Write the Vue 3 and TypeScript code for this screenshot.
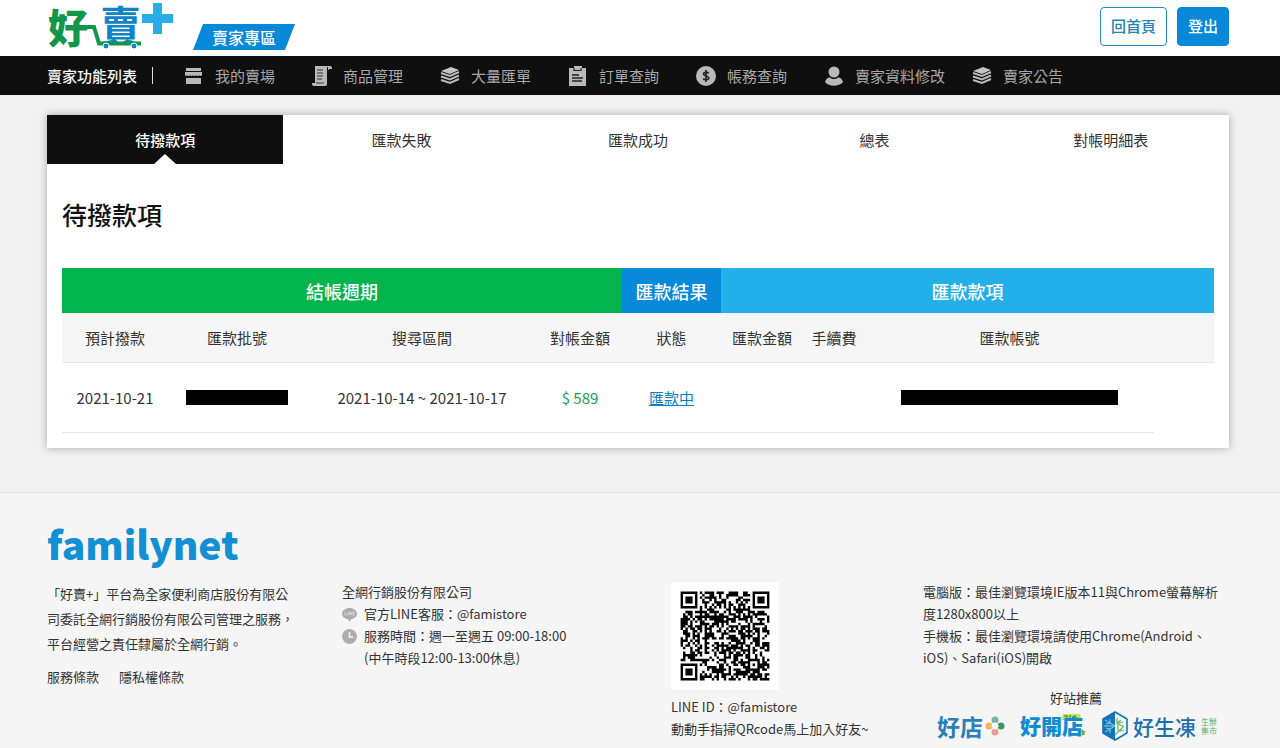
<script setup lang="ts">
import { ref } from 'vue'

interface NavItem {
  icon: string
  label: string
}

const navItems: NavItem[] = [
  { icon: 'shop', label: '我的賣場' },
  { icon: 'scroll', label: '商品管理' },
  { icon: 'stack', label: '大量匯單' },
  { icon: 'clipboard', label: '訂單查詢' },
  { icon: 'dollar', label: '帳務查詢' },
  { icon: 'user', label: '賣家資料修改' },
  { icon: 'stack', label: '賣家公告' },
]

const tabs: string[] = ['待撥款項', '匯款失敗', '匯款成功', '總表', '對帳明細表']
const activeTab = ref<string>(tabs[0])

const columns: string[] = ['預計撥款', '匯款批號', '搜尋區間', '對帳金額', '狀態', '匯款金額', '手續費', '匯款帳號', '']

// QR symbol: 37 modules per side with finder, timing and alignment patterns.
const QR_SIZE = 37

function ring(x: number, y: number, cx: number, cy: number): number {
  return Math.max(Math.abs(x - cx), Math.abs(y - cy))
}

function buildQrPath(): string {
  let seed = 20211021
  const next = (): number => {
    seed = (seed * 1103515245 + 12345) % 2147483648
    return seed / 2147483648
  }
  const finders: [number, number][] = [[3, 3], [QR_SIZE - 4, 3], [3, QR_SIZE - 4]]
  let path = ''
  for (let y = 0; y < QR_SIZE; y++) {
    for (let x = 0; x < QR_SIZE; x++) {
      let dark = next() < 0.54
      if (y === 6 || x === 6) dark = (x + y) % 2 === 0
      const align = ring(x, y, 30, 30)
      if (align <= 2) dark = align !== 1
      for (const [cx, cy] of finders) {
        const d = ring(x, y, cx, cy)
        if (d <= 4) dark = d === 3 || d <= 1
      }
      if (dark) path += `M${x} ${y}h1v1h-1z`
    }
  }
  return path
}

const qrPath = buildQrPath()
</script>

<template>
  <div class="page">
    <header class="header">
      <a class="brand" href="#" aria-label="好賣+">
        <svg width="128" height="56" viewBox="0 0 128 56">
          <text x="1" y="43" class="brand-hao">好</text>
          <text x="53" y="41" class="brand-mai">賣</text>
          <path d="M36 27H47L52 43.500H94" fill="none" stroke="#12964a" stroke-width="4" />
          <circle cx="59" cy="46" r="3" fill="#1184c6" stroke="#fff" />
          <circle cx="87" cy="46" r="3" fill="#1184c6" stroke="#fff" />
          <path d="M106 3h9v11h11v9h-11v11h-9V23H95v-9h11z" fill="#27aee6" />
        </svg>
      </a>
      <span class="zone">賣家專區</span>
      <div class="actions">
        <button type="button" class="btn">回首頁</button>
        <button type="button" class="btn btn-fill">登出</button>
      </div>
    </header>

    <nav class="nav">
      <span class="nav-title">賣家功能列表</span>
      <a v-for="item in navItems" :key="item.label" class="nav-item" href="#">
        <svg width="20" height="22" viewBox="0 0 20 22" aria-hidden="true">
          <g v-if="item.icon === 'shop'" fill="#b9b9b9">
            <path d="M2 3h15v3H2zM1 7h17v2.500a1.500 1.500 0 0 1-3 0 1.500 1.500 0 0 1-3 0 1.500 1.500 0 0 1-3 0 1.500 1.500 0 0 1-3 0 1.500 1.500 0 0 1-3 0 1 1.500 0 0 1-2 0z" />
            <path d="M2 13h15v6H2z" />
          </g>
          <g v-else-if="item.icon === 'scroll'">
            <path d="M3 1h14v4h-2v14a2 2 0 0 1-2 2H2a2 2 0 0 1-2-2v-1h3z" fill="#b9b9b9" />
            <path d="M15 1h3a2 2 0 0 1 2 2v1h-3z" fill="#b9b9b9" />
            <path d="M5 5h6M5 8h6M5 11h6M5 14h5M4 18h8" stroke="#333" stroke-width="1" />
            <path d="M15.500 2v3" stroke="#111" />
          </g>
          <g v-else-if="item.icon === 'stack'">
            <path d="M1 6l10-4 8 3-9 4z" fill="#c4c4c4" />
            <path d="M1 8l9 3 9-4M1 11.500l9 3 9-4M1 15l9 3 9-4" fill="none" stroke="#b9b9b9" stroke-width="2" />
          </g>
          <g v-else-if="item.icon === 'clipboard'">
            <path d="M1 3h5V1h8v2h4v18H1z" fill="#b9b9b9" />
            <path d="M6 3v2.500h7V3" fill="none" stroke="#222" stroke-width="1.200" />
            <path d="M4 10h7M4 13h11M4 16h10" stroke="#222" stroke-width="1.300" />
          </g>
          <g v-else-if="item.icon === 'dollar'">
            <circle cx="10" cy="11" r="10" fill="#b9b9b9" />
            <path d="M12.800 8.300C12 7 7.500 6.800 7.500 9c0 2.400 5.300 1.400 5.300 4 0 2.300-4.600 2.300-5.600.500M10 5v12" fill="none" stroke="#222" stroke-width="1.600" />
          </g>
          <g v-else fill="#b9b9b9">
            <circle cx="10" cy="7" r="5.500" />
            <path d="M1 17c1-4 4-5 5-4.500 2 2 6 2 8 0 1-.500 4 .500 5 4.500-4 5-14 5-18 0z" />
          </g>
        </svg>
        <span>{{ item.label }}</span>
      </a>
    </nav>

    <main class="main">
      <section class="card">
        <div class="tabs" role="tablist">
          <button
            v-for="tab in tabs"
            :key="tab"
            type="button"
            role="tab"
            class="tab"
            :class="{ active: tab === activeTab }"
            :aria-selected="tab === activeTab"
            @click="activeTab = tab"
          >{{ tab }}</button>
        </div>
        <div class="card-body">
          <h1>待撥款項</h1>
          <table>
            <colgroup>
              <col class="c-date"><col class="c-batch"><col class="c-range"><col class="c-sum"><col class="c-status">
              <col class="c-paid"><col class="c-fee"><col><col class="c-end">
            </colgroup>
            <thead>
              <tr class="groups">
                <th colspan="4" class="g-green">結帳週期</th>
                <th class="g-blue">匯款結果</th>
                <th colspan="4" class="g-sky">匯款款項</th>
              </tr>
              <tr class="heads">
                <th v-for="(name, i) in columns" :key="i">{{ name }}</th>
              </tr>
            </thead>
            <tbody>
              <tr>
                <td>2021-10-21</td>
                <td><span class="mask mask-batch"></span></td>
                <td>2021-10-14 ~ 2021-10-17</td>
                <td class="money">$ 589</td>
                <td><a class="status" href="#">匯款中</a></td>
                <td></td>
                <td></td>
                <td><span class="mask mask-account"></span></td>
                <td class="end"></td>
              </tr>
            </tbody>
          </table>
        </div>
      </section>
    </main>

    <footer class="footer">
      <div class="company">familynet</div>
      <div class="foot-grid">
        <div class="about">
          <p>「好賣+」平台為全家便利商店股份有限公司委託全網行銷股份有限公司管理之服務，平台經營之責任隸屬於全網行銷。</p>
          <div class="links"><a href="#">服務條款</a><a href="#">隱私權條款</a></div>
        </div>
        <div class="contact">
          <p>全網行銷股份有限公司</p>
          <div class="contact-row">
            <svg width="15" height="15" viewBox="0 0 15 15" aria-hidden="true">
              <path d="M7.500 1C3.400 1 0 3.500 0 6.700c0 2.800 2.500 5 6 5.600L7.500 15 9 12.300c3.500-.600 6-2.800 6-5.600C15 3.500 11.600 1 7.500 1z" fill="#adadad" />
              <path d="M3 5v3h1.500M6 5v3M7.500 8V5L9.300 8V5M12.300 5H11v3h1.300M11 6.500h1.200" fill="none" stroke="#e6e6e6" stroke-width=".7" />
            </svg>
            <span>官方LINE客服：@famistore</span>
          </div>
          <div class="contact-row">
            <svg width="15" height="15" viewBox="0 0 15 15" aria-hidden="true">
              <circle cx="7.500" cy="7.500" r="7.500" fill="#adadad" />
              <path d="M7.500 3v5H11" fill="none" stroke="#f5f5f5" stroke-width="1.500" />
            </svg>
            <span>服務時間：週一至週五 09:00-18:00<br>(中午時段12:00-13:00休息)</span>
          </div>
        </div>
        <div class="line">
          <svg class="qr" viewBox="-4 -4 45 45" role="img" aria-label="LINE QRcode">
            <path :d="qrPath" fill="#000" />
          </svg>
          <p>LINE ID：@famistore<br>動動手指掃QRcode馬上加入好友~</p>
        </div>
        <div class="support">
          <p>電腦版：最佳瀏覽環境IE版本11與Chrome螢幕解析度1280x800以上</p>
          <p>手機板：最佳瀏覽環境請使用Chrome(Android、iOS)、Safari(iOS)開啟</p>
          <div class="sites-title">好站推薦</div>
          <div class="sites">
            <a class="site site-store" href="#">
              <span>好店</span>
              <svg width="20" height="20" viewBox="0 0 20 20" aria-hidden="true">
                <circle cx="10" cy="4" r="3.500" fill="#6fb7a7" />
                <circle cx="4" cy="10" r="3.500" fill="#efb65f" />
                <circle cx="16" cy="10" r="3.500" fill="#3b9b5a" />
                <circle cx="10" cy="16" r="3.500" fill="#eb9b91" />
                <path d="M10 6l4 4-4 4-4-4z" fill="#fff" />
              </svg>
            </a>
            <a class="site site-open" href="#">
              <svg width="67" height="34" viewBox="0 0 67 34" aria-label="好開店">
                <path d="M43 5h17l2 6H41z" fill="#c6e35f" />
                <text x="0" y="25" class="open-text">好開店</text>
                <path d="M44 7h3v2M50 6v3M55 6v3h3" fill="none" stroke="#4aa348" stroke-width="1.500" />
                <path d="M61 20l5 3-2 1 1 2-2 0-1 1z" fill="#6fae3c" />
              </svg>
            </a>
            <a class="site site-fresh" href="#">
              <svg width="26" height="30" viewBox="0 0 26 30" aria-hidden="true">
                <path d="M13 1l12 7v14l-12 7-12-7V8z" fill="#f2faf4" stroke="#1474b8" stroke-width="1.600" />
                <path d="M13 1v28L1 22V8z" fill="#1474b8" />
                <path d="M13 15L3 9M13 15H2M13 15L3 21M8 8v4l-4 1M8 22v-4l-4-1" stroke="#8fd0ee" fill="none" />
                <path d="M13 24l9-9M15 7v5l4-3M16 12l5-1M16 20v-7l5 2M18 20l4-1" stroke="#62b56d" fill="none" stroke-width="1.200" />
              </svg>
              <span>好生凍</span>
              <small>生鮮<br>集市</small>
            </a>
          </div>
        </div>
      </div>
    </footer>
  </div>
</template>

<style>
body {
  margin: 0;
  background: #f5f5f5;
}
</style>

<style scoped>
.page {
  min-height: 100vh;
  display: flex;
  flex-direction: column;
  background: #f1f1f1;
  color: #333;
  font-family: "Noto Sans CJK TC", "Noto Sans", sans-serif;
  font-size: 15px;
  line-height: 22px;
}
.page * { box-sizing: border-box; }
p, h1 { margin: 0; }
a { color: inherit; text-decoration: none; }
button { font: inherit; cursor: pointer; }
svg { display: block; flex: none; overflow: visible; }

.header, .nav, .main, .footer { padding-left: 47px; padding-right: 51px; }

.header {
  display: flex;
  height: 56px;
  background: #fff;
}
.brand-hao { font-size: 40px; font-weight: 900; fill: #12964a; }
.brand-mai { font-size: 41px; font-weight: 700; fill: #1184c6; }
.zone {
  align-self: flex-end;
  margin: 0 0 6px 18px;
  padding: 0 19px;
  font-size: 16px;
  font-weight: 500;
  line-height: 26px;
  color: #fff;
  background: #0689d8;
  clip-path: polygon(10px 0, 100% 0, calc(100% - 10px) 100%, 0 100%);
}
.actions {
  display: flex;
  gap: 10px;
  margin-left: auto;
  align-items: center;
  padding-bottom: 3px;
}
.btn {
  height: 39px;
  padding: 0 10px 2px;
  border: 1px solid #2a8abb;
  border-radius: 4px;
  background: #fff;
  color: #2482b5;
  font-weight: 500;
}
.btn-fill { background: #0689d8; border-color: #0689d8; color: #fff; }

.nav {
  display: flex;
  align-items: center;
  height: 39px;
  background: #0f0f0f;
  color: #a8a8a8;
}
.nav-title {
  padding-right: 15px;
  margin-right: 31px;
  border-right: 1px solid #ddd;
  color: #f4f4f4;
  font-weight: 500;
  line-height: 17px;
}
.nav-item {
  display: flex;
  align-items: center;
  gap: 11px;
  min-width: 128px;
  padding-right: 27px;
  white-space: nowrap;
}

.main { padding-top: 20px; padding-bottom: 44px; }
.card { background: #fff; box-shadow: 0 0 8px rgba(0, 0, 0, 0.3); }
.tabs { display: grid; grid-template-columns: repeat(5, 1fr); }
.tab {
  position: relative;
  height: 49px;
  padding: 0;
  border: 0;
  background: none;
  color: #333;
}
.tab.active { background: #0f0f0f; color: #fff; font-weight: 500; }
.tab.active::after {
  content: "";
  position: absolute;
  bottom: 0;
  left: 50%;
  margin-left: -11px;
  border: 11px solid transparent;
  border-top-width: 0;
  border-bottom: 10px solid #fff;
}
.card-body { padding: 31px 15px 15px; }
h1 {
  margin-bottom: 35px;
  font-size: 25px;
  font-weight: 500;
  line-height: 38px;
  color: #111;
}

table { width: 100%; table-layout: fixed; border-collapse: separate; border-spacing: 0; }
.c-date { width: 106px; }
.c-batch { width: 138px; }
.c-range { width: 232px; }
.c-sum { width: 84px; }
.c-status { width: 99px; }
.c-paid { width: 82px; }
.c-fee { width: 62px; }
.c-end { width: 60px; }
th, td { padding: 0; text-align: center; white-space: nowrap; }
.groups th { height: 45px; font-size: 18px; font-weight: 500; color: #fff; }
.g-green { background: #03b34b; }
.g-blue { background: #0689d8; }
.g-sky { background: #23b0e8; }
.heads th { height: 50px; font-weight: 400; background: #f6f6f6; border-bottom: 1px solid #e6e6e6; }
td { height: 70px; border-bottom: 1px solid #e6e6e6; }
td.end { border-bottom: 0; }
.money { color: #12a04a; }
.status { color: #0c7fc4; text-decoration: underline; }
.mask { display: block; height: 15px; margin: 0 auto; background: #000; }
.mask-batch { width: 102px; }
.mask-account { width: 217px; }

.footer {
  flex: 1;
  border-top: 1px solid #e2e2e2;
  background: #f5f5f5;
  font-size: 13px;
}
.company {
  padding-top: 24px;
  height: 88px;
  font-size: 39px;
  font-weight: 900;
  line-height: 52px;
  color: #138fd3;
}
.foot-grid { display: grid; grid-template-columns: 295fr 329fr 252fr 306fr; }
.about p { max-width: 250px; line-height: 25px; }
.links { display: flex; gap: 20px; margin-top: 10px; }
.contact-row { display: flex; gap: 7px; }
.contact-row svg { margin-top: 4px; }
.line { padding-top: 1px; }
.qr { width: 108px; height: 108px; margin: 0 0 6px; background: #fff; }
.support p { max-width: 304px; }
.sites-title { margin-top: 18px; text-align: center; }
.sites {
  display: flex;
  align-items: center;
  justify-content: space-between;
  height: 34px;
  padding: 0 12px 0 14px;
}
.site { display: flex; align-items: center; white-space: nowrap; font-weight: 500; color: #1474b8; }
.site-store { gap: 2px; font-size: 23px; font-weight: 700; color: #2a80b9; }
.open-text { font-size: 21px; font-weight: 900; fill: #128bd0; }
.site-fresh { gap: 5px; font-size: 21px; color: #1b70ad; }
.site-fresh small { font-size: 8px; line-height: 9px; font-weight: 400; color: #5bb07a; }
</style>
